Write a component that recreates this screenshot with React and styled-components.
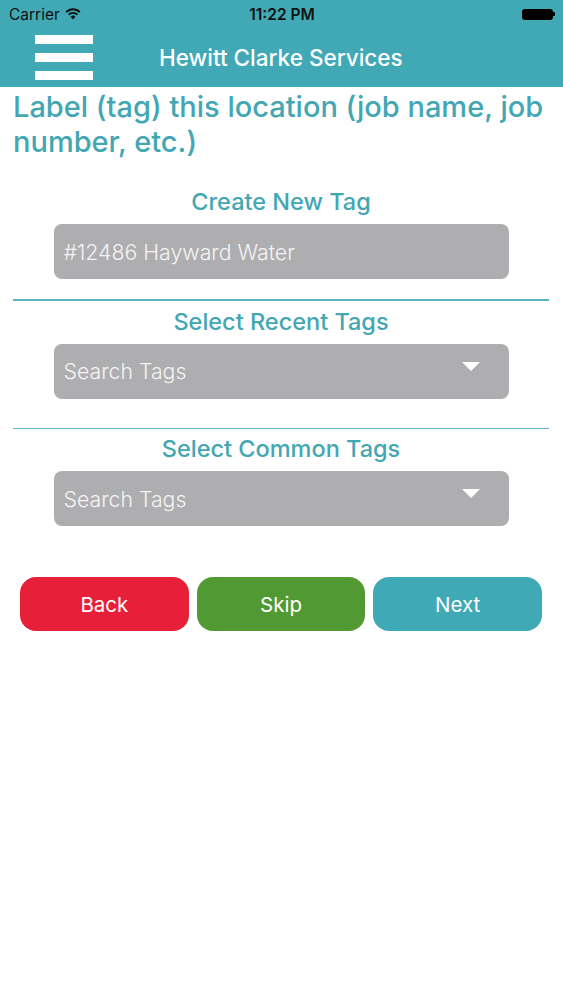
import React from "react";
import styled, { createGlobalStyle } from "styled-components";

const GlobalStyle = createGlobalStyle`
  html, body {
    margin: 0;
    padding: 0;
    background: #fff;
  }
  body {
    font-family: Inter, "Liberation Sans", Arial, sans-serif;
  }
`;

const Page = styled.div`
  width: 563px;
  min-height: 1000px;
  background: #fff;
`;

const Header = styled.header`
  background: #40a9b5;
  height: 87px;
  display: flex;
  flex-direction: column;
`;

const StatusBar = styled.div`
  height: 28px;
  display: grid;
  grid-template-columns: 1fr auto 1fr;
  align-items: center;
  padding: 0 8px 0 9px;
  color: #111;
  font-size: 15.5px;
`;

const Carrier = styled.div`
  display: flex;
  align-items: center;
  gap: 5px;
`;

const Clock = styled.div`
  font-weight: 600;
`;

const Battery = styled.div`
  justify-self: end;
  display: flex;
  align-items: center;
`;

const BatteryBody = styled.div`
  width: 31px;
  height: 11px;
  background: #000;
  border-radius: 3px;
`;

const BatteryTip = styled.div`
  width: 2px;
  height: 4px;
  background: #000;
  border-radius: 0 1px 1px 0;
`;

const NavBar = styled.div`
  flex: 1;
  display: flex;
  align-items: center;
`;

const MenuButton = styled.button`
  margin-left: 35px;
  width: 58px;
  padding: 0;
  border: 0;
  background: none;
  display: flex;
  flex-direction: column;
  gap: 9px;
`;

const MenuBar = styled.span`
  display: block;
  height: 9px;
  background: #fff;
`;

const NavTitle = styled.h1`
  margin: 0 0 0 66px;
  color: #fff;
  font-size: 22.5px;
  font-weight: 500;
`;

const Content = styled.main`
  padding: 2px 14px 0 13px;
  display: flex;
  flex-direction: column;
`;

const Heading = styled.h2`
  margin: 0;
  color: #43a7b3;
  font-size: 29px;
  line-height: 35px;
  font-weight: 500;
`;

const Section = styled.section`
  display: flex;
  flex-direction: column;
  align-items: center;
  gap: 8px;
  margin-top: ${(p) => p.$top}px;
`;

const SectionTitle = styled.h3`
  margin: 0;
  color: #43a7b3;
  font-size: 23.5px;
  line-height: 28px;
  font-weight: 500;
`;

const Field = styled.div`
  width: 455px;
  height: 55px;
  box-sizing: border-box;
  border-radius: 8px;
  background: #aeadaf;
  display: flex;
  align-items: center;
  justify-content: space-between;
  padding: 0 29px 0 10px;
  color: #f4f4f4;
  font-size: 21.3px;
  font-weight: 300;
`;

const Caret = styled.span`
  width: 0;
  height: 0;
  border-left: 9px solid transparent;
  border-right: 9px solid transparent;
  border-top: 9px solid #fff;
  margin-top: -10px;
`;

const Divider = styled.hr`
  margin: ${(p) => p.$top}px 0 0;
  border: 0;
  height: 1.5px;
  background: #5ab7c1;
`;

const ButtonRow = styled.div`
  margin-top: 51px;
  padding: 0 7px;
  display: grid;
  grid-template-columns: repeat(3, 1fr);
  gap: 8px;
`;

const ActionButton = styled.button`
  height: 54px;
  border: 0;
  border-radius: 16px;
  background: ${(p) => p.$bg};
  color: #fff;
  font-family: inherit;
  font-size: 20.5px;
  font-weight: 400;
`;

function Wifi() {
  return (
    <svg width="16" height="12" viewBox="0 0 16 12">
      <path d="M8 11.5 L5.6 8.8 A3.4 3.4 0 0 1 10.4 8.8 Z" fill="#111" />
      <path
        d="M3.6 6.7 A6.2 6.2 0 0 1 12.4 6.7"
        stroke="#111"
        strokeWidth="1.9"
        fill="none"
      />
      <path
        d="M1.2 4.1 A9.6 9.6 0 0 1 14.8 4.1"
        stroke="#111"
        strokeWidth="1.9"
        fill="none"
      />
    </svg>
  );
}

function App() {
  return (
    <Page>
      <GlobalStyle />
      <Header>
        <StatusBar>
          <Carrier>
            Carrier <Wifi />
          </Carrier>
          <Clock>11:22 PM</Clock>
          <Battery>
            <BatteryBody />
            <BatteryTip />
          </Battery>
        </StatusBar>
        <NavBar>
          <MenuButton aria-label="Menu">
            <MenuBar />
            <MenuBar />
            <MenuBar />
          </MenuButton>
          <NavTitle>Hewitt Clarke Services</NavTitle>
        </NavBar>
      </Header>
      <Content>
        <Heading>Label (tag) this location (job name, job number, etc.)</Heading>
        <Section $top={29}>
          <SectionTitle>Create New Tag</SectionTitle>
          <Field>#12486 Hayward Water</Field>
        </Section>
        <Divider $top={20} />
        <Section $top={7}>
          <SectionTitle>Select Recent Tags</SectionTitle>
          <Field>
            Search Tags <Caret />
          </Field>
        </Section>
        <Divider $top={29} />
        <Section $top={6}>
          <SectionTitle>Select Common Tags</SectionTitle>
          <Field>
            Search Tags <Caret />
          </Field>
        </Section>
        <ButtonRow>
          <ActionButton $bg="#e81f38">Back</ActionButton>
          <ActionButton $bg="#519a33">Skip</ActionButton>
          <ActionButton $bg="#40a9b6">Next</ActionButton>
        </ButtonRow>
      </Content>
    </Page>
  );
}

export default App;
